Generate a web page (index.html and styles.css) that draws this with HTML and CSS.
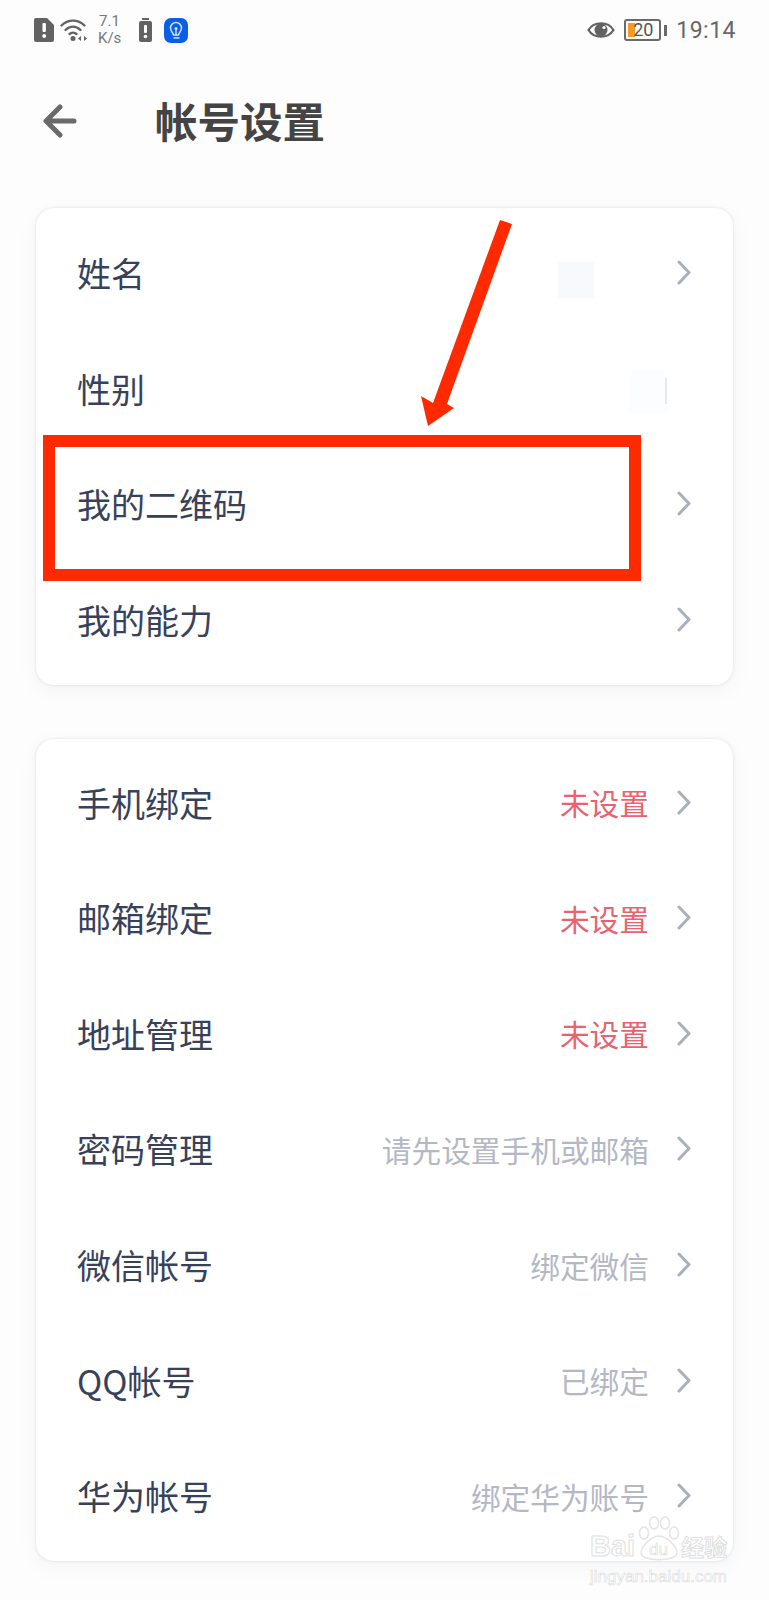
FILE: index.html
```html
<!DOCTYPE html>
<html lang="zh-CN">
<head>
    <meta charset="UTF-8">
    <meta name="viewport" content="width=device-width, initial-scale=1.0">
    <title>帐号设置</title>
    <link rel="stylesheet" href="styles.css">
</head>
<body>
    <div class="status">
        <div class="status-left">
            <svg class="ic-sim" width="20" height="24" viewBox="0 0 20 24">
                <path d="M2 0h11l7 7v15a2 2 0 0 1-2 2H2a2 2 0 0 1-2-2V2a2 2 0 0 1 2-2z" fill="#626262"/>
                <rect x="8.500" y="5" width="3.400" height="9" rx="1" fill="#fff"/>
                <circle cx="10.200" cy="18" r="2" fill="#fff"/>
            </svg>
            <svg class="ic-wifi" width="28" height="24" viewBox="0 0 28 24">
                <g fill="none" stroke="#626262" stroke-width="2.400" stroke-linecap="round">
                    <path d="M1.500 7.500C8 1 18 1 24.500 7.500"/>
                    <path d="M5.500 12C10 7.500 16 7.500 20.500 12"/>
                    <path d="M9.500 16C11.500 14.300 14.500 14.300 16.500 16"/>
                </g>
                <circle cx="13" cy="20.500" r="2.500" fill="#626262"/>
                <path d="M21 18l-3 2.500 3 2.500zM24 18l3 2.500-3 2.500z" fill="#626262"/>
            </svg>
            <div class="speed"><span>7.1</span><span>K/s</span></div>
            <svg class="ic-batt" width="13" height="24" viewBox="0 0 13 24">
                <rect x="3" y="0" width="7" height="2" fill="#626262"/>
                <rect x="0" y="3" width="13" height="21" rx="2" fill="#626262"/>
                <rect x="5" y="7" width="3" height="8" rx="1" fill="#fff"/>
                <circle cx="6.500" cy="18.500" r="1.800" fill="#fff"/>
            </svg>
            <svg class="ic-bulb" width="24" height="25" viewBox="0 0 24 25">
                <rect width="24" height="25" rx="7" fill="#0b5fe6"/>
                <path d="M9.500 17c0-2-3-3.500-3-7a5.500 5.500 0 0 1 11 0c0 3.500-3 5-3 7z" fill="none" stroke="#cfe0fb" stroke-width="1.500" stroke-linejoin="round"/>
                <path d="M10 20h5M12 11v6" fill="none" stroke="#cfe0fb" stroke-width="1.500" stroke-linecap="round"/>
                <circle cx="12" cy="10.500" r="1.500" fill="#cfe0fb"/>
            </svg>
        </div>
        <div class="status-right">
            <svg width="28" height="20" viewBox="0 0 28 20">
                <path d="M1.500 10C7 1 21 1 26.500 10 21 19 7 19 1.500 10z" fill="none" stroke="#626262" stroke-width="2.200"/>
                <circle cx="14" cy="10" r="6.500" fill="#626262"/>
                <circle cx="17" cy="7.500" r="1.600" fill="#fff"/>
            </svg>
            <div class="battery">
                <span class="battery-fill"></span>
                <span class="battery-num">20</span>
            </div>
            <span class="battery-nub"></span>
            <span class="clock">19:14</span>
        </div>
    </div>

    <div class="header">
        <svg class="back" width="34" height="34" viewBox="0 0 34 34">
            <path d="M17 3L3 17l14 14M4 17h27" fill="none" stroke="#6a6a6a" stroke-width="5" stroke-linecap="round" stroke-linejoin="round"/>
        </svg>
        <h1>帐号设置</h1>
    </div>

    <div class="card">
        <div class="row">
            <span class="label">姓名</span>
            <span class="blur blur-name"></span>
            <svg class="arrow" width="14" height="25" viewBox="0 0 14 25"><path d="M2 2l10 10.500L2 23"/></svg>
        </div>
        <div class="row">
            <span class="label">性别</span>
            <span class="blur blur-gender"></span>
        </div>
        <div class="row">
            <span class="label">我的二维码</span>
            <svg class="arrow" width="14" height="25" viewBox="0 0 14 25"><path d="M2 2l10 10.500L2 23"/></svg>
        </div>
        <div class="row">
            <span class="label">我的能力</span>
            <svg class="arrow" width="14" height="25" viewBox="0 0 14 25"><path d="M2 2l10 10.500L2 23"/></svg>
        </div>
    </div>

    <div class="card card-bindings">
        <div class="row">
            <span class="label">手机绑定</span>
            <span class="value warn">未设置</span>
            <svg class="arrow" width="14" height="25" viewBox="0 0 14 25"><path d="M2 2l10 10.500L2 23"/></svg>
        </div>
        <div class="row">
            <span class="label">邮箱绑定</span>
            <span class="value warn">未设置</span>
            <svg class="arrow" width="14" height="25" viewBox="0 0 14 25"><path d="M2 2l10 10.500L2 23"/></svg>
        </div>
        <div class="row">
            <span class="label">地址管理</span>
            <span class="value warn">未设置</span>
            <svg class="arrow" width="14" height="25" viewBox="0 0 14 25"><path d="M2 2l10 10.500L2 23"/></svg>
        </div>
        <div class="row">
            <span class="label">密码管理</span>
            <span class="value">请先设置手机或邮箱</span>
            <svg class="arrow" width="14" height="25" viewBox="0 0 14 25"><path d="M2 2l10 10.500L2 23"/></svg>
        </div>
        <div class="row">
            <span class="label">微信帐号</span>
            <span class="value">绑定微信</span>
            <svg class="arrow" width="14" height="25" viewBox="0 0 14 25"><path d="M2 2l10 10.500L2 23"/></svg>
        </div>
        <div class="row">
            <span class="label">QQ帐号</span>
            <span class="value">已绑定</span>
            <svg class="arrow" width="14" height="25" viewBox="0 0 14 25"><path d="M2 2l10 10.500L2 23"/></svg>
        </div>
        <div class="row">
            <span class="label">华为帐号</span>
            <span class="value">绑定华为账号</span>
            <svg class="arrow" width="14" height="25" viewBox="0 0 14 25"><path d="M2 2l10 10.500L2 23"/></svg>
        </div>
    </div>

    <!-- annotations drawn on top of the screenshot -->
    <div class="mark-box"></div>
    <svg class="mark-arrow" width="769" height="600" viewBox="0 0 769 600">
        <path d="M500 220L512 224 447 404 454 408 428 426 421 396 433 403z" fill="#ff2a00"/>
    </svg>

    <div class="watermark">
        <div class="wm-top">
            <span>Bai</span>
            <svg width="44" height="46" viewBox="0 0 44 46">
                <g fill="none" stroke="#e4e4e4" stroke-width="1.500">
                    <ellipse cx="7" cy="17" rx="4.500" ry="6"/>
                    <ellipse cx="17" cy="7" rx="4.500" ry="6"/>
                    <ellipse cx="28" cy="7" rx="4.500" ry="6"/>
                    <ellipse cx="37" cy="17" rx="4.500" ry="6"/>
                    <path d="M22 20c-7 0-18 10-18 17 0 9 36 9 36 0 0-7-11-17-18-17z"/>
                </g>
                <text x="12" y="39" class="wm-du">du</text>
            </svg>
            <span class="wm-cn">经验</span>
        </div>
        <div class="wm-url">jingyan.baidu.com</div>
    </div>
</body>
</html>
```

FILE: styles.css
```css
* {
    box-sizing: border-box;
    margin: 0;
    padding: 0;
}
body {
    position: relative;
    width: 769px;
    height: 1600px;
    overflow: hidden;
    background: #fdfdfd;
    font-family: "Noto Sans CJK SC", "Noto Sans", sans-serif;
}
.status {
    display: flex;
    justify-content: space-between;
    align-items: center;
    height: 60px;
    padding: 0 33px 0 34px;
    color: #626262;
}
.status-left, .status-right {
    display: flex;
    align-items: center;
}
.ic-wifi {
    margin-left: 6px;
}
.speed {
    display: flex;
    flex-direction: column;
    margin-left: 10px;
    font-family: "Roboto", sans-serif;
    font-size: 15px;
    line-height: 17px;
    color: #777;
}
.speed span:first-child {
    padding-left: 1px;
}
.ic-batt {
    margin-left: 18px;
}
.ic-bulb {
    margin-left: 12px;
}
.battery {
    position: relative;
    width: 37px;
    height: 22px;
    margin-left: 9px;
    border: 2px solid #6a6a6a;
    border-radius: 3px;
}
.battery-fill {
    position: absolute;
    left: 2px;
    top: 2px;
    width: 7px;
    height: 14px;
    background: #f59a23;
}
.battery-num {
    position: absolute;
    left: 7px;
    top: -1px;
    font-family: "Roboto", sans-serif;
    font-size: 18px;
    line-height: 20px;
    color: #555;
}
.battery-nub {
    width: 3px;
    height: 11px;
    margin-left: 3px;
    background: #6a6a6a;
}
.clock {
    margin-left: 9px;
    font-family: "Roboto", sans-serif;
    font-size: 23px;
    letter-spacing: 0.5px;
    color: #666;
}
.header {
    display: flex;
    align-items: center;
    height: 124px;
    margin-bottom: 24px;
    padding-left: 43px;
}
.back {
    flex: none;
    margin-top: -2px;
}
h1 {
    margin-top: -4px;
    margin-left: 78px;
    font-size: 42.500px;
    line-height: 60px;
    font-weight: 700;
    color: #444;
}
.card {
    width: 697px;
    margin: 0 0 54px 36px;
    padding: 7px 42px 8px 41px;
    background: #fff;
    border-radius: 18px;
    box-shadow: 0 0 3px rgba(120, 130, 160, 0.25), 0 6px 18px rgba(120, 130, 160, 0.07);
}
.card-bindings {
    padding-top: 5px;
    padding-bottom: 7px;
}
.row {
    display: flex;
    align-items: center;
    height: 115.600px;
}
.label {
    flex: 1;
    font-size: 34px;
    line-height: 46px;
    margin-top: 1px;
    color: #37425a;
}
.value {
    margin-top: 2px;
    margin-right: 28px;
    font-size: 29.700px;
    line-height: 40px;
    color: #b3b8c4;
}
.warn {
    color: #e9636e;
}
.arrow {
    flex: none;
    margin-top: 0;
    fill: none;
    stroke: #a9afbe;
    stroke-width: 3;
    stroke-linecap: round;
    stroke-linejoin: round;
}
.blur {
    height: 36px;
    background: #f8f9fd;
}
.blur-name {
    width: 36px;
    margin-top: 14px;
    margin-right: 83px;
}
.blur-gender {
    width: 38px;
    height: 44px;
    margin-top: 6px;
    margin-right: 24px;
    background: linear-gradient(#e4e7ef, #e4e7ef) right center / 2px 26px no-repeat, #fcfdfe;
}
.mark-box {
    position: absolute;
    left: 43px;
    top: 435px;
    width: 598px;
    height: 146px;
    border: 12px solid #ff2a00;
}
.mark-arrow {
    position: absolute;
    left: 0;
    top: 0;
}
.watermark {
    position: absolute;
    left: 590px;
    top: 1516px;
    width: 140px;
    color: #fff;
    -webkit-text-stroke: 1px #e0e0e0;
}
.wm-top {
    display: flex;
    align-items: flex-end;
    height: 46px;
    font-family: "Liberation Sans", sans-serif;
    font-size: 29px;
    line-height: 32px;
    font-weight: 700;
}
.wm-top svg {
    flex: none;
    margin-left: 2px;
}
.wm-du {
    font-size: 17px;
    font-weight: 400;
    fill: #fff;
    stroke: #e0e0e0;
    stroke-width: 0.7px;
}
.wm-cn {
    font-family: "Noto Sans CJK SC", sans-serif;
    font-size: 23px;
    line-height: 32px;
    margin-left: 0;
}
.wm-url {
    margin-top: 5px;
    font-family: "Liberation Sans", sans-serif;
    font-size: 17px;
    line-height: 20px;
    white-space: nowrap;
    -webkit-text-stroke: 0.6px #dcdcdc;
}
```
